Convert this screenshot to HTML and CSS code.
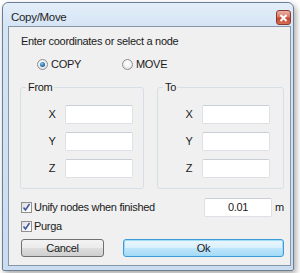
FILE: index.html
```html
<!DOCTYPE html>
<html>
<head>
<meta charset="utf-8">
<link rel="stylesheet" href="styles.css">
</head>
<body>
<div class="window">
  <div class="titlebar">
    <span class="title">Copy/Move</span>
    <span class="close"><svg width="9" height="8" viewBox="0 0 9 8"><path d="M1.5 1 L7.5 7 M7.5 1 L1.5 7" stroke="#fff" stroke-width="2"/></svg></span>
  </div>
  <div class="client">
    <div class="intro">Enter coordinates or select a node</div>
    <div class="radios">
      <label class="radio first"><span class="rb checked"></span>COPY</label>
      <label class="radio"><span class="rb"></span>MOVE</label>
    </div>
    <div class="groups">
      <fieldset class="group from">
        <legend>From</legend>
        <div class="row"><span class="lbl">X</span><span class="box"></span></div>
        <div class="row"><span class="lbl">Y</span><span class="box"></span></div>
        <div class="row"><span class="lbl">Z</span><span class="box"></span></div>
      </fieldset>
      <fieldset class="group to">
        <legend>To</legend>
        <div class="row"><span class="lbl">X</span><span class="box"></span></div>
        <div class="row"><span class="lbl">Y</span><span class="box"></span></div>
        <div class="row"><span class="lbl">Z</span><span class="box"></span></div>
      </fieldset>
    </div>
    <div class="opt opt-unify">
      <span class="cb"><svg width="9" height="9" viewBox="0 0 9 9"><path d="M1.5 4.5 L3.5 7 L7.5 1" fill="none" stroke="#3f5a9c" stroke-width="1.6"/></svg></span>
      <span class="opt-text">Unify nodes when finished</span>
      <span class="box value">0.01</span>
      <span class="unit">m</span>
    </div>
    <div class="opt opt-purga">
      <span class="cb"><svg width="9" height="9" viewBox="0 0 9 9"><path d="M1.5 4.5 L3.5 7 L7.5 1" fill="none" stroke="#3f5a9c" stroke-width="1.6"/></svg></span>
      <span class="opt-text">Purga</span>
    </div>
    <div class="buttons">
      <span class="btn cancel">Cancel</span>
      <span class="btn ok">Ok</span>
    </div>
  </div>
</div>
</body>
</html>
```
FILE: styles.css
```css
html, body {
  margin: 0;
  padding: 0;
}
body {
  width: 300px;
  height: 273px;
  overflow: hidden;
  background: #ffffff;
  font-family: "Liberation Sans", Arial, sans-serif;
  font-size: 11px;
  line-height: 15px;
  letter-spacing: -0.3px;
  color: #1a1a1a;
}
.window {
  margin: 2px 0 0 2px;
  width: 292px;
  height: 269px;
  box-sizing: border-box;
  border: 1px solid #6c7f95;
  border-radius: 6px 6px 2px 2px;
  background: linear-gradient(180deg, #e4eef9 0px, #d6e5f5 22px, #c9dcf0 100%);
  padding: 0 2px 4px 5px;
  display: flex;
  flex-direction: column;
  box-shadow: 2px 3px 6px rgba(0, 0, 0, 0.35);
}
.titlebar {
  height: 23px;
  display: flex;
  align-items: flex-start;
  justify-content: space-between;
  padding-left: 3px;
}
.title {
  margin-top: 7px;
  font-size: 11.5px;
  color: #1e1e1e;
}
.close {
  margin-top: 7px;
  width: 15px;
  height: 15px;
  box-sizing: border-box;
  border: 1px solid #8b3a33;
  border-radius: 3px;
  background: linear-gradient(180deg, #eab0a3 0%, #d97c66 45%, #c5462f 55%, #d66d50 100%);
  display: flex;
  align-items: center;
  justify-content: center;
}
.client {
  flex: 1;
  border: 1px solid #8595aa;
  background: #f0f0f0;
  padding: 7px 0 0 11px;
}
.intro {
  padding-left: 1px;
  height: 15px;
}
.radios {
  margin-top: 8px;
  display: flex;
  height: 15px;
  align-items: center;
  padding-left: 17px;
}
.radio {
  display: flex;
  align-items: center;
}
.radio.first {
  width: 85px;
}
.rb {
  width: 11px;
  height: 11px;
  box-sizing: border-box;
  border-radius: 50%;
  border: 1px solid #8f8f8f;
  background: radial-gradient(circle at 50% 40%, #ffffff 0, #f4f4f4 40%, #d4d4d4 100%);
  margin-right: 3px;
  display: flex;
  align-items: center;
  justify-content: center;
}
.rb.checked::after {
  content: "";
  width: 5px;
  height: 5px;
  border-radius: 50%;
  background: radial-gradient(circle at 40% 35%, #8fd0f5 0, #2f7fc0 45%, #12457a 100%);
}
.groups {
  margin-top: 8px;
  display: flex;
  gap: 13px;
}
.group {
  margin: 0;
  padding: 10px 0 10px 25px;
  border: 1px solid #d5dfe5;
  border-radius: 3px;
  min-width: 0;
  box-sizing: border-box;
  display: flex;
  flex-direction: column;
  gap: 8px;
}
.group.from {
  width: 124px;
}
.group.to {
  width: 127px;
}
.group legend {
  padding: 0 2px;
  margin-left: -20px;
  line-height: 15px;
}
.row {
  display: flex;
  align-items: center;
  height: 19px;
}
.lbl {
  width: 12px;
  text-align: center;
  margin-right: 7px;
}
.box {
  width: 68px;
  height: 19px;
  box-sizing: border-box;
  background: #ffffff;
  border: 1px solid #dde1e6;
  border-top-color: #c9ced4;
  border-radius: 2px;
}
.opt {
  display: flex;
  align-items: center;
}
.opt-unify {
  margin-top: 9px;
  height: 19px;
}
.opt-purga {
  margin-top: 2px;
  height: 15px;
}
.cb {
  width: 11px;
  height: 11px;
  box-sizing: border-box;
  margin-left: 1px;
  margin-right: 2px;
  border: 1px solid #8f8f8f;
  background: linear-gradient(135deg, #dcdcdc 0%, #f6f6f6 60%, #ffffff 100%);
  display: flex;
  align-items: center;
  justify-content: center;
}
.opt-text {
  flex: 1;
}
.value {
  text-align: center;
  line-height: 17px;
  margin-right: 3px;
}
.unit {
  width: 15px;
}
.buttons {
  margin-top: 5px;
  display: flex;
  gap: 19px;
  padding-left: 1px;
}
.btn {
  height: 18px;
  box-sizing: border-box;
  border-radius: 3px;
  text-align: center;
  line-height: 16px;
}
.cancel {
  width: 83px;
  border: 1px solid #707070;
  background: linear-gradient(180deg, #f3f3f3 0%, #ebebeb 50%, #dddddd 51%, #cfcfcf 100%);
}
.ok {
  width: 161px;
  border: 1px solid #3c9ad6;
  background: linear-gradient(180deg, #eaf6fd 0%, #d9f0fc 50%, #bee6fd 51%, #a7d9f5 100%);
  box-shadow: inset 0 0 0 1px #9fdcf8;
}
```
